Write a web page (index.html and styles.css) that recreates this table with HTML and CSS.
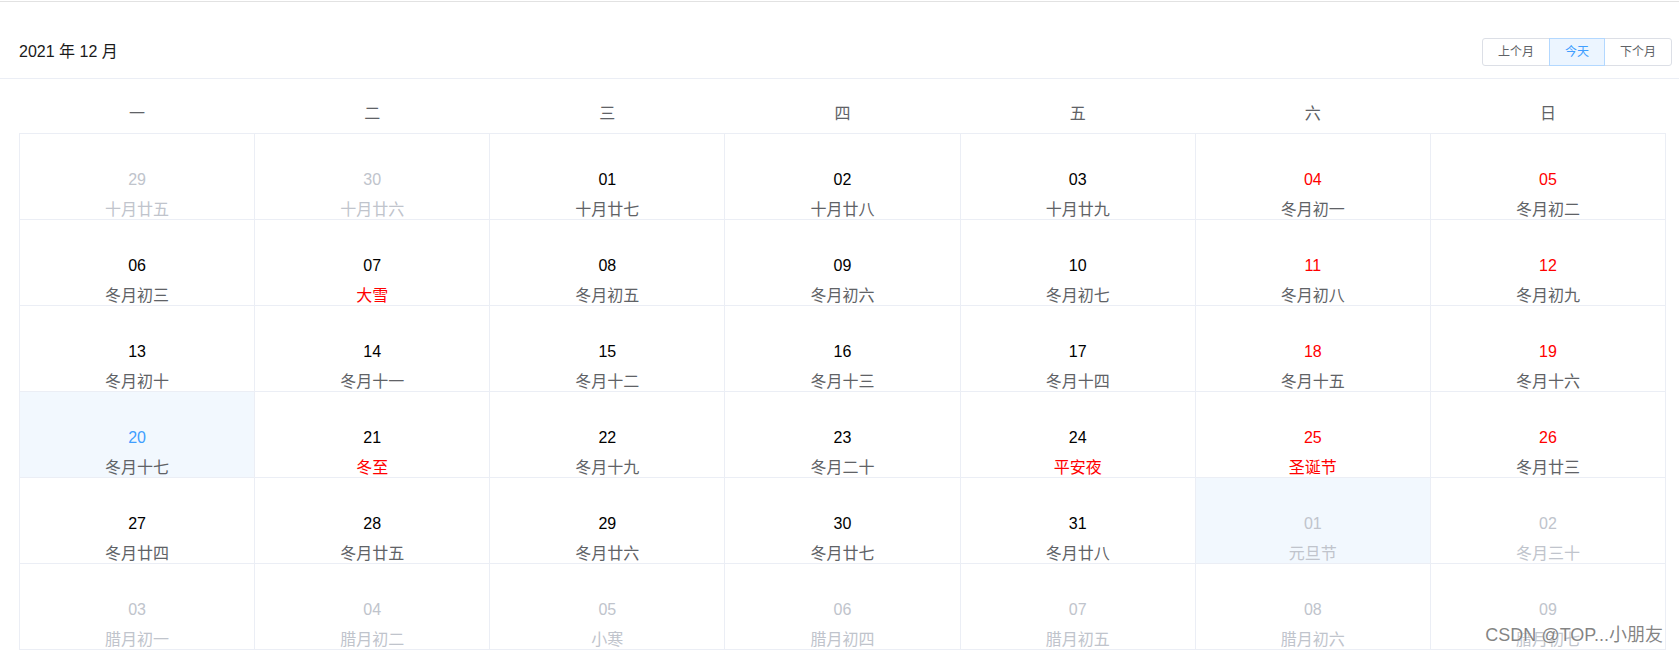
FILE: index.html
```html
<!DOCTYPE html>
<html lang="zh-CN">
<head>
<meta charset="utf-8">
<title>日历</title>
<link rel="stylesheet" href="styles.css">
</head>
<body>
<div class="topline"></div>
<div class="calendar">
  <div class="cal-header">
    <div class="cal-title">2021 年 12 月</div>
    <div class="btn-group">
      <button class="btn">上个月</button>
      <button class="btn btn-active">今天</button>
      <button class="btn">下个月</button>
    </div>
  </div>
  <div class="cal-body">
    <table class="cal-table">
      <thead>
        <tr><th>一</th><th>二</th><th>三</th><th>四</th><th>五</th><th>六</th><th>日</th></tr>
      </thead>
      <tbody>
        <tr>
          <td class="other"><div class="cell"><div class="num">29</div><div class="lunar">十月廿五</div></div></td>
          <td class="other"><div class="cell"><div class="num">30</div><div class="lunar">十月廿六</div></div></td>
          <td><div class="cell"><div class="num">01</div><div class="lunar">十月廿七</div></div></td>
          <td><div class="cell"><div class="num">02</div><div class="lunar">十月廿八</div></div></td>
          <td><div class="cell"><div class="num">03</div><div class="lunar">十月廿九</div></div></td>
          <td><div class="cell"><div class="num red">04</div><div class="lunar">冬月初一</div></div></td>
          <td><div class="cell"><div class="num red">05</div><div class="lunar">冬月初二</div></div></td>
        </tr>
        <tr>
          <td><div class="cell"><div class="num">06</div><div class="lunar">冬月初三</div></div></td>
          <td><div class="cell"><div class="num">07</div><div class="lunar red">大雪</div></div></td>
          <td><div class="cell"><div class="num">08</div><div class="lunar">冬月初五</div></div></td>
          <td><div class="cell"><div class="num">09</div><div class="lunar">冬月初六</div></div></td>
          <td><div class="cell"><div class="num">10</div><div class="lunar">冬月初七</div></div></td>
          <td><div class="cell"><div class="num red">11</div><div class="lunar">冬月初八</div></div></td>
          <td><div class="cell"><div class="num red">12</div><div class="lunar">冬月初九</div></div></td>
        </tr>
        <tr>
          <td><div class="cell"><div class="num">13</div><div class="lunar">冬月初十</div></div></td>
          <td><div class="cell"><div class="num">14</div><div class="lunar">冬月十一</div></div></td>
          <td><div class="cell"><div class="num">15</div><div class="lunar">冬月十二</div></div></td>
          <td><div class="cell"><div class="num">16</div><div class="lunar">冬月十三</div></div></td>
          <td><div class="cell"><div class="num">17</div><div class="lunar">冬月十四</div></div></td>
          <td><div class="cell"><div class="num red">18</div><div class="lunar">冬月十五</div></div></td>
          <td><div class="cell"><div class="num red">19</div><div class="lunar">冬月十六</div></div></td>
        </tr>
        <tr>
          <td class="selected"><div class="cell"><div class="num today">20</div><div class="lunar">冬月十七</div></div></td>
          <td><div class="cell"><div class="num">21</div><div class="lunar red">冬至</div></div></td>
          <td><div class="cell"><div class="num">22</div><div class="lunar">冬月十九</div></div></td>
          <td><div class="cell"><div class="num">23</div><div class="lunar">冬月二十</div></div></td>
          <td><div class="cell"><div class="num">24</div><div class="lunar red">平安夜</div></div></td>
          <td><div class="cell"><div class="num red">25</div><div class="lunar red">圣诞节</div></div></td>
          <td><div class="cell"><div class="num red">26</div><div class="lunar">冬月廿三</div></div></td>
        </tr>
        <tr>
          <td><div class="cell"><div class="num">27</div><div class="lunar">冬月廿四</div></div></td>
          <td><div class="cell"><div class="num">28</div><div class="lunar">冬月廿五</div></div></td>
          <td><div class="cell"><div class="num">29</div><div class="lunar">冬月廿六</div></div></td>
          <td><div class="cell"><div class="num">30</div><div class="lunar">冬月廿七</div></div></td>
          <td><div class="cell"><div class="num">31</div><div class="lunar">冬月廿八</div></div></td>
          <td class="other selected"><div class="cell"><div class="num">01</div><div class="lunar">元旦节</div></div></td>
          <td class="other"><div class="cell"><div class="num">02</div><div class="lunar">冬月三十</div></div></td>
        </tr>
        <tr>
          <td class="other"><div class="cell"><div class="num">03</div><div class="lunar">腊月初一</div></div></td>
          <td class="other"><div class="cell"><div class="num">04</div><div class="lunar">腊月初二</div></div></td>
          <td class="other"><div class="cell"><div class="num">05</div><div class="lunar">小寒</div></div></td>
          <td class="other"><div class="cell"><div class="num">06</div><div class="lunar">腊月初四</div></div></td>
          <td class="other"><div class="cell"><div class="num">07</div><div class="lunar">腊月初五</div></div></td>
          <td class="other"><div class="cell"><div class="num">08</div><div class="lunar">腊月初六</div></div></td>
          <td class="other"><div class="cell"><div class="num">09</div><div class="lunar">腊月初七</div></div></td>
        </tr>
      </tbody>
    </table>
  </div>
</div>
<div class="watermark">CSDN @TOP...小朋友</div>
</body>
</html>
```

FILE: styles.css
```css
html, body {
  margin: 0;
  padding: 0;
  background: #fff;
  overflow: hidden;
}
body {
  padding-top: 1px;
  font-family: "Liberation Sans", "Noto Sans CJK SC", sans-serif;
  color: #303133;
  position: relative;
  height: 652px;
}
.topline {
  height: 0;
  border-top: 1px solid #e2e2e2;
}
.cal-header {
  display: flex;
  justify-content: space-between;
  align-items: center;
  padding: 36px 7px 12px 19px;
  border-bottom: 1px solid #ebeef5;
}
.cal-title {
  font-size: 16px;
  line-height: 28px;
  color: #1a1a1a;
}
.btn-group {
  display: flex;
}
.btn {
  font-family: "Liberation Sans", "Noto Sans CJK SC", sans-serif;
  font-size: 12px;
  line-height: 12px;
  height: 28px;
  padding: 7px 15px;
  box-sizing: border-box;
  border: 1px solid #dcdfe6;
  background: #fff;
  color: #606266;
  margin: 0 -1px 0 0;
  border-radius: 0;
  position: relative;
}
.btn:first-child {
  border-radius: 3px 0 0 3px;
}
.btn:last-child {
  border-radius: 0 3px 3px 0;
  margin-right: 0;
}
.btn-active {
  background: #ecf5ff;
  border-color: #b3d8ff;
  color: #409eff;
  z-index: 1;
}
.cal-body {
  padding: 12px 13px 0 19px;
}
.cal-table {
  width: 100%;
  border-collapse: collapse;
  table-layout: fixed;
}
.cal-table th {
  padding: 14px 0 10px;
  font-size: 16px;
  line-height: 18px;
  font-weight: normal;
  color: #606266;
}
.cal-table td {
  padding: 0;
  border: 1px solid #ebeef5;
  vertical-align: top;
}
.cal-table td.selected {
  background: #f2f8fe;
}
.cell {
  height: 85px;
  box-sizing: border-box;
  padding-top: 32px;
  text-align: center;
  overflow: visible;
}
.num {
  font-size: 16px;
  line-height: 28px;
  color: #000;
}
.lunar {
  font-size: 16px;
  line-height: 28px;
  height: 23px;
  margin-top: 2px;
  color: #606266;
}
.red {
  color: #ff0000;
}
.today {
  color: #409eff;
}
.other .num,
.other .lunar {
  color: #c0c4cc;
}
.watermark {
  position: absolute;
  right: 16px;
  bottom: 6px;
  font-size: 18px;
  line-height: 24px;
  color: rgba(110, 110, 110, 0.85);
  text-shadow: 0 0 2px #fff;
  white-space: nowrap;
}
```
